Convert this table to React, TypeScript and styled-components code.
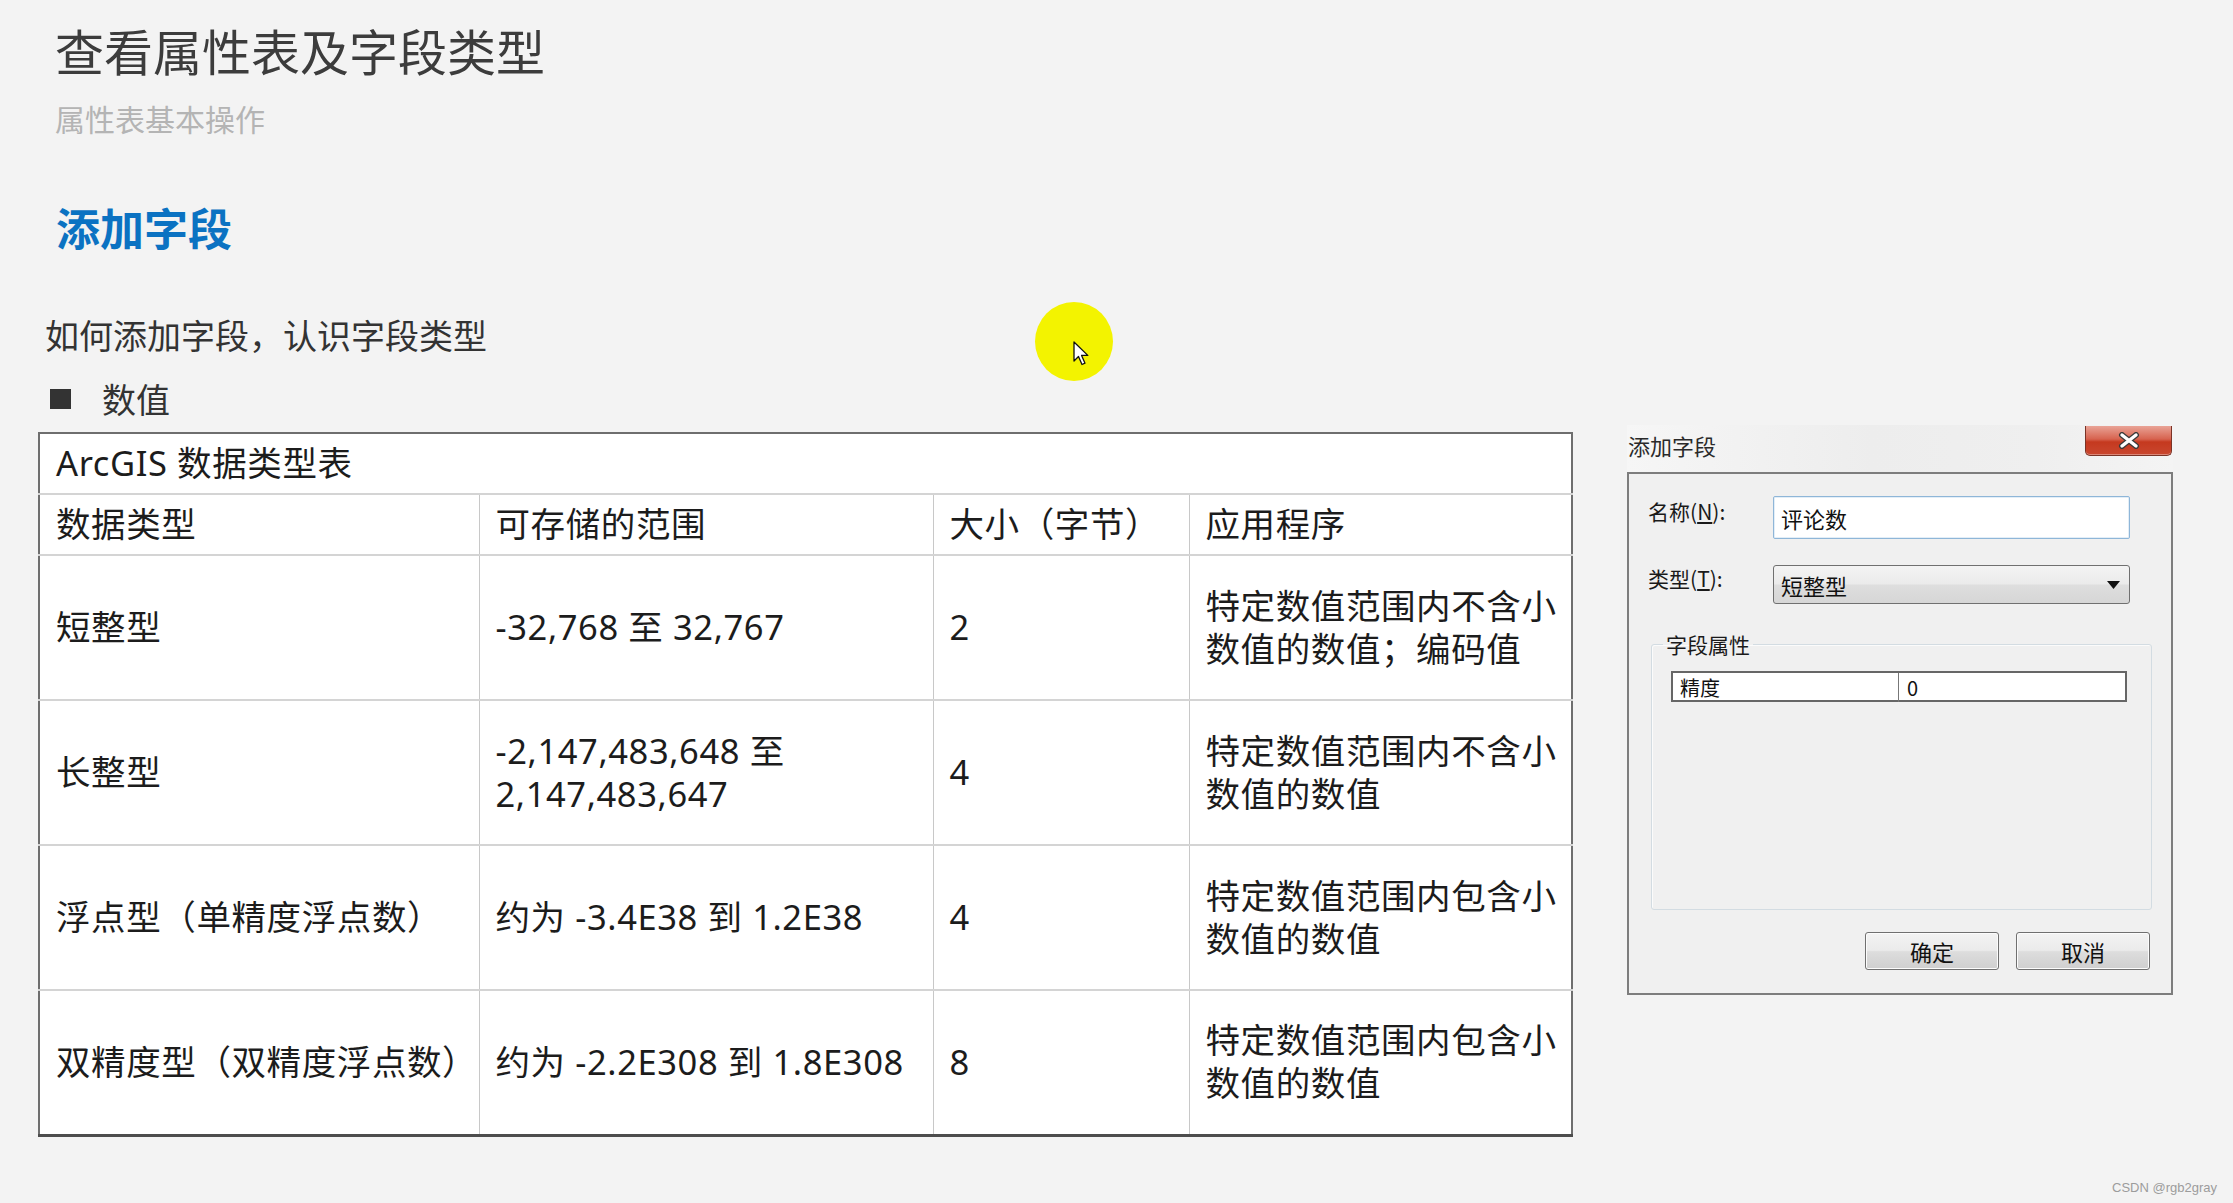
import React from "react";
import styled, { createGlobalStyle } from "styled-components";

const GlobalStyle = createGlobalStyle`
  html, body { margin: 0; padding: 0; background: #f3f3f3; }
  * { box-sizing: border-box; }
`;

const SANS = `"Noto Sans", "Noto Sans CJK SC", sans-serif`;
const CJK = `"Noto Sans CJK SC", "Noto Sans", sans-serif`;

const Page = styled.div`
  position: relative;
  width: 2233px;
  height: 1203px;
  overflow: hidden;
  background: #f3f3f3;
  font-family: ${SANS};
  padding-top: 25px;
  display: flex;
  flex-direction: column;
`;

const Title = styled.h1`
  margin: 0 0 0 55px;
  font-family: ${CJK};
  font-size: 49px;
  line-height: 1;
  font-weight: 400;
  color: #3c3c3c;
`;

const Subtitle = styled.div`
  margin: 29px 0 0 55px;
  font-family: ${CJK};
  font-size: 30px;
  line-height: 1;
  color: #b4b4b4;
`;

const SectionHeading = styled.h2`
  margin: 72px 0 0 56px;
  font-family: ${CJK};
  font-size: 44px;
  line-height: 1;
  font-weight: 700;
  color: #0b72c2;
`;

const Intro = styled.p`
  margin: 69px 0 0 45px;
  font-family: ${CJK};
  font-size: 34px;
  line-height: 1;
  color: #333;
`;

const BulletRow = styled.div`
  margin: 30px 0 0 50px;
  display: flex;
  align-items: center;
  gap: 31px;
  font-family: ${CJK};
  font-size: 34px;
  line-height: 1;
  color: #333;
`;

const Square = styled.span`
  width: 21px;
  height: 20px;
  background: #333;
`;

const ContentRow = styled.div`
  margin-top: 9px;
  padding-left: 38px;
  display: flex;
  align-items: flex-start;
  gap: 54px;
`;

const DataTable = styled.table`
  margin-top: 7px;
  width: 1533px;
  border-collapse: collapse;
  table-layout: fixed;
  background: #fff;
  border-top: 2px solid #6e6e6e;
  border-left: 2px solid #6e6e6e;
  border-right: 2px solid #6e6e6e;
  border-bottom: 3px solid #4d4d4d;
  font-family: ${SANS};
  color: #1c1c1c;
`;

const Row = styled.tr<{ $h: number }>`
  height: ${(p) => p.$h}px;
`;

const Cell = styled.td`
  padding: 0 8px 2px 16px;
  font-size: 34.5px;
  letter-spacing: 0.6px;
  line-height: 43px;
  vertical-align: middle;
  border-bottom: 2px solid #d4d4d4;
  border-right: 1px solid #c8c8c8;
  &:last-child { border-right: none; padding-right: 4px; }
`;

const CaptionCell = styled(Cell)`
  line-height: 1.2;
`;

const Dialog = styled.div`
  width: 546px;
  display: flex;
  flex-direction: column;
  font-family: ${CJK};
  color: #1a1a1a;
`;

const TitleBar = styled.div`
  height: 47px;
  display: flex;
  justify-content: space-between;
  align-items: flex-start;
  background: linear-gradient(to right, #f6f6f6 0%, #ededed 45%, #efefef 75%, #f4f4f4 100%);
`;

const DialogTitle = styled.div`
  margin: 9px 0 0 1px;
  font-size: 22px;
  line-height: 1;
  color: #2a2a2a;
`;

const CloseButton = styled.div`
  margin: 1px 1px 0 0;
  width: 87px;
  height: 30px;
  display: flex;
  align-items: center;
  justify-content: center;
  border: 1px solid #7a3326;
  border-top: none;
  border-radius: 0 0 5px 5px;
  background: linear-gradient(to bottom, #e9a396 0%, #d7634f 45%, #c5391f 55%, #c9472f 100%);
  box-shadow: inset 0 -1px 0 rgba(255, 255, 255, 0.35);
`;

const DialogBody = styled.div`
  height: 523px;
  border: 2px solid #7d7d7d;
  background: #f0f0f0;
  padding: 22px 19px 23px 19px;
  display: flex;
  flex-direction: column;
`;

const FormGrid = styled.div`
  display: grid;
  grid-template-columns: 125px 357px;
  grid-template-rows: 43px 39px;
  row-gap: 26px;
`;

const FieldLabel = styled.label<{ $top: number }>`
  padding-top: ${(p) => p.$top}px;
  font-size: 21px;
  line-height: 24px;
  color: #1a1a1a;
  u { text-decoration: underline; text-underline-offset: 2px; }
`;

const TextInput = styled.div`
  border: 1px solid #8fb6d8;
  border-radius: 2px;
  background: #fff;
  box-shadow: inset 0 0 0 1px #e3eef7;
  display: flex;
  align-items: center;
  padding-left: 7px;
  font-size: 22px;
  color: #111;
`;

const SelectBox = styled.div`
  border: 1px solid #707070;
  border-radius: 3px;
  background: linear-gradient(to bottom, #f4f4f4 0%, #ebebeb 48%, #dedede 52%, #d6d6d6 100%);
  display: flex;
  align-items: center;
  justify-content: space-between;
  padding: 0 9px 0 7px;
  font-size: 22px;
  color: #111;
`;

const Fieldset = styled.fieldset`
  margin: 28px 0 0 3px;
  flex: 1;
  min-height: 0;
  border: 1px solid #d3dce2;
  border-radius: 3px;
  box-shadow: inset 1px 1px 0 #fbfbfb;
  padding: 14px 23px 0 19px;
`;

const Legend = styled.legend`
  margin-left: -8px;
  padding: 0 3px;
  font-size: 21px;
  line-height: 25px;
  color: #1a1a1a;
`;

const PropGrid = styled.div`
  width: 456px;
  height: 31px;
  display: grid;
  grid-template-columns: 1fr 1fr;
  border: 2px solid #666;
  background: #fff;
`;

const PropCell = styled.div<{ $first?: boolean }>`
  display: flex;
  align-items: center;
  padding-left: ${(p) => (p.$first ? 7 : 8)}px;
  border-right: ${(p) => (p.$first ? "1px solid #777" : "none")};
  font-size: 20px;
  color: #111;
`;

const ButtonRow = styled.div`
  margin-top: 22px;
  padding-right: 2px;
  display: flex;
  justify-content: flex-end;
  gap: 17px;
`;

const DialogButton = styled.div`
  width: 134px;
  height: 38px;
  border: 1px solid #707070;
  border-radius: 3px;
  background: linear-gradient(to bottom, #f3f3f3 0%, #ebebeb 48%, #dddddd 52%, #cfcfcf 100%);
  box-shadow: inset 0 0 0 1px #fcfcfc;
  display: flex;
  align-items: center;
  justify-content: center;
  font-size: 22px;
  color: #111;
`;

const Highlight = styled.div`
  position: absolute;
  left: 1035px;
  top: 302px;
  width: 78px;
  height: 79px;
  border-radius: 50%;
  background: #f3f300;
`;

const Pointer = styled.svg`
  position: absolute;
  left: 1073px;
  top: 341px;
`;

const Watermark = styled.div`
  position: absolute;
  right: 16px;
  bottom: 8px;
  font-family: "Liberation Sans", Arial, sans-serif;
  font-size: 13px;
  color: #9c9c9c;
`;

const rows = [
  { type: "短整型", range: "-32,768 至 32,767", size: "2", app: "特定数值范围内不含小数值的数值；编码值" },
  { type: "长整型", range: "-2,147,483,648 至 2,147,483,647", size: "4", app: "特定数值范围内不含小数值的数值" },
  { type: "浮点型（单精度浮点数）", range: "约为 -3.4E38 到 1.2E38", size: "4", app: "特定数值范围内包含小数值的数值" },
  { type: "双精度型（双精度浮点数）", range: "约为 -2.2E308 到 1.8E308", size: "8", app: "特定数值范围内包含小数值的数值" },
];

export default function App() {
  return (
    <>
      <GlobalStyle />
      <Page>
        <Title>查看属性表及字段类型</Title>
        <Subtitle>属性表基本操作</Subtitle>
        <SectionHeading>添加字段</SectionHeading>
        <Intro>如何添加字段，认识字段类型</Intro>
        <BulletRow>
          <Square />
          <span>数值</span>
        </BulletRow>
        <ContentRow>
          <DataTable>
            <colgroup>
              <col style={{ width: 440 }} />
              <col style={{ width: 454 }} />
              <col style={{ width: 256 }} />
              <col style={{ width: 383 }} />
            </colgroup>
            <tbody>
              <Row $h={61}>
                <CaptionCell colSpan={4}>ArcGIS 数据类型表</CaptionCell>
              </Row>
              <Row $h={61}>
                <CaptionCell>数据类型</CaptionCell>
                <CaptionCell>可存储的范围</CaptionCell>
                <CaptionCell>大小（字节）</CaptionCell>
                <CaptionCell>应用程序</CaptionCell>
              </Row>
              {rows.map((r) => (
                <Row $h={145} key={r.type}>
                  <Cell>{r.type}</Cell>
                  <Cell>{r.range}</Cell>
                  <Cell>{r.size}</Cell>
                  <Cell>{r.app}</Cell>
                </Row>
              ))}
            </tbody>
          </DataTable>
          <Dialog>
            <TitleBar>
              <DialogTitle>添加字段</DialogTitle>
              <CloseButton>
                <svg width="22" height="17" viewBox="0 0 22 17">
                  <path d="M4 3 L18 14 M18 3 L4 14" stroke="#3a3a3a" strokeWidth="6" strokeLinecap="round" />
                  <path d="M4 3 L18 14 M18 3 L4 14" stroke="#ffffff" strokeWidth="3.4" strokeLinecap="round" />
                </svg>
              </CloseButton>
            </TitleBar>
            <DialogBody>
              <FormGrid>
                <FieldLabel $top={3}>名称(<u>N</u>):</FieldLabel>
                <TextInput>评论数</TextInput>
                <FieldLabel $top={1}>类型(<u>T</u>):</FieldLabel>
                <SelectBox>
                  <span>短整型</span>
                  <svg width="13" height="8" viewBox="0 0 13 8">
                    <path d="M0 0 H13 L6.5 8 Z" fill="#111" />
                  </svg>
                </SelectBox>
              </FormGrid>
              <Fieldset>
                <Legend>字段属性</Legend>
                <PropGrid>
                  <PropCell $first>精度</PropCell>
                  <PropCell>0</PropCell>
                </PropGrid>
              </Fieldset>
              <ButtonRow>
                <DialogButton>确定</DialogButton>
                <DialogButton>取消</DialogButton>
              </ButtonRow>
            </DialogBody>
          </Dialog>
        </ContentRow>
        <Highlight />
        <Pointer width="18" height="27" viewBox="0 0 18 27">
          <path
            d="M1 1 L1 20 L5.5 15.5 L9 23.5 L12 22.2 L8.6 14.4 L14.8 14.4 Z"
            fill="#ffffff"
            stroke="#111"
            strokeWidth="1.3"
            strokeLinejoin="round"
          />
        </Pointer>
        <Watermark>CSDN @rgb2gray</Watermark>
      </Page>
    </>
  );
}
